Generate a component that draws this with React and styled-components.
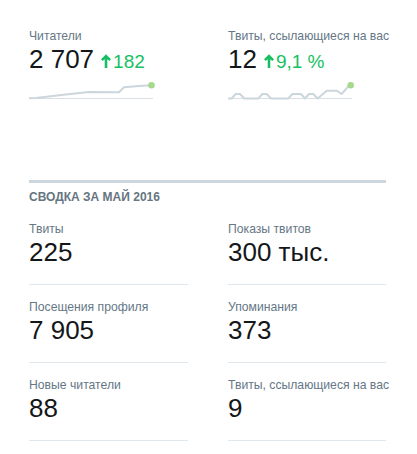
import React from "react";
import styled, { createGlobalStyle } from "styled-components";

const GlobalStyle = createGlobalStyle`
  body {
    margin: 0;
    background: #ffffff;
    font-family: "Liberation Sans", Helvetica, Arial, sans-serif;
    color: #14171a;
  }
`;

const Page = styled.div`
  width: 357px;
  padding: 27.5px 31px 0 29px;
`;

const TwoCols = styled.div`
  display: grid;
  grid-template-columns: 159px 158px;
  column-gap: 40px;
`;

const Label = styled.div`
  font-size: 12.2px;
  line-height: 16px;
  color: #657786;
  white-space: nowrap;
`;

const Value = styled.div`
  display: flex;
  align-items: baseline;
  font-size: 26px;
  line-height: 30px;
  color: #14171a;
  white-space: nowrap;
`;

const Change = styled.span`
  display: inline-flex;
  align-items: baseline;
  margin-left: 7px;
  font-size: 19px;
  color: #17bf63;
`;

const Arrow = styled.svg`
  width: 10px;
  height: 14px;
  margin-right: 2px;
  flex: none;
`;

const Spark = styled.svg`
  display: block;
  margin-top: 4.5px;
  width: 125px;
  height: 20px;
  overflow: visible;
`;

const Summary = styled.section`
  margin-top: 79px;
  border-top: 3px solid #ccd6dd;
  padding-top: 6px;
`;

const Heading = styled.h3`
  margin: 0 0 1.5px;
  font-size: 12px;
  line-height: 16px;
  font-weight: bold;
  color: #66757f;
  text-transform: uppercase;
`;

const Cell = styled.div`
  padding: 14px 0 17px;
  border-bottom: 1px solid #e1e8ed;
`;

const ArrowUp = () => (
  <Arrow viewBox="0 0 10 14">
    <path
      d="M5 14V2M0.9 6.1L5 2l4.1 4.1"
      fill="none"
      stroke="#17bf63"
      strokeWidth="2.6"
    />
  </Arrow>
);

const Sparkline = ({ points }) => {
  const last = points[points.length - 1];
  return (
    <Spark viewBox="0 0 125 20">
      <line x1="0" y1="17.5" x2="124" y2="17.5" stroke="#d8e0e6" strokeWidth="1" />
      <polyline
        points={points.map((p) => p.join(",")).join(" ")}
        fill="none"
        stroke="#ccd6dd"
        strokeWidth="2"
        strokeLinejoin="round"
      />
      <circle cx={last[0] + 0.5} cy={last[1]} r="3.3" fill="#a6d98c" />
    </Spark>
  );
};

const followersLine = [
  [0, 17.3], [7, 17], [30, 14.3], [60, 11], [90, 11.3], [95, 6.3], [110, 5], [122, 4.3],
];

const mentionsLine = [
  [0, 17.5], [3.7, 17.5], [7.7, 13], [12, 13], [16.3, 17.5], [30.3, 17.5], [34.3, 13],
  [38.7, 13], [43, 17.5], [60.3, 17.5], [64.3, 13], [73, 13], [77, 17.5], [81, 13],
  [85.3, 13], [89.7, 17.5], [98.7, 9.7], [108.7, 9.7], [113.7, 13], [120.3, 5.3], [122.2, 4.3],
];

const highlights = [
  { label: "Читатели", value: "2 707", change: "182", line: followersLine },
  { label: "Твиты, ссылающиеся на вас", value: "12", change: "9,1 %", line: mentionsLine },
];

const stats = [
  { label: "Твиты", value: "225" },
  { label: "Показы твитов", value: "300 тыс." },
  { label: "Посещения профиля", value: "7 905" },
  { label: "Упоминания", value: "373" },
  { label: "Новые читатели", value: "88" },
  { label: "Твиты, ссылающиеся на вас", value: "9" },
];

export default function App() {
  return (
    <>
      <GlobalStyle />
      <Page>
        <TwoCols>
          {highlights.map((item) => (
            <div key={item.label}>
              <Label>{item.label}</Label>
              <Value>
                {item.value}
                <Change>
                  <ArrowUp />
                  {item.change}
                </Change>
              </Value>
              <Sparkline points={item.line} />
            </div>
          ))}
        </TwoCols>
        <Summary>
          <Heading>Сводка за май 2016</Heading>
          <TwoCols>
            {stats.map((item) => (
              <Cell key={item.label}>
                <Label>{item.label}</Label>
                <Value>{item.value}</Value>
              </Cell>
            ))}
          </TwoCols>
        </Summary>
      </Page>
    </>
  );
}
